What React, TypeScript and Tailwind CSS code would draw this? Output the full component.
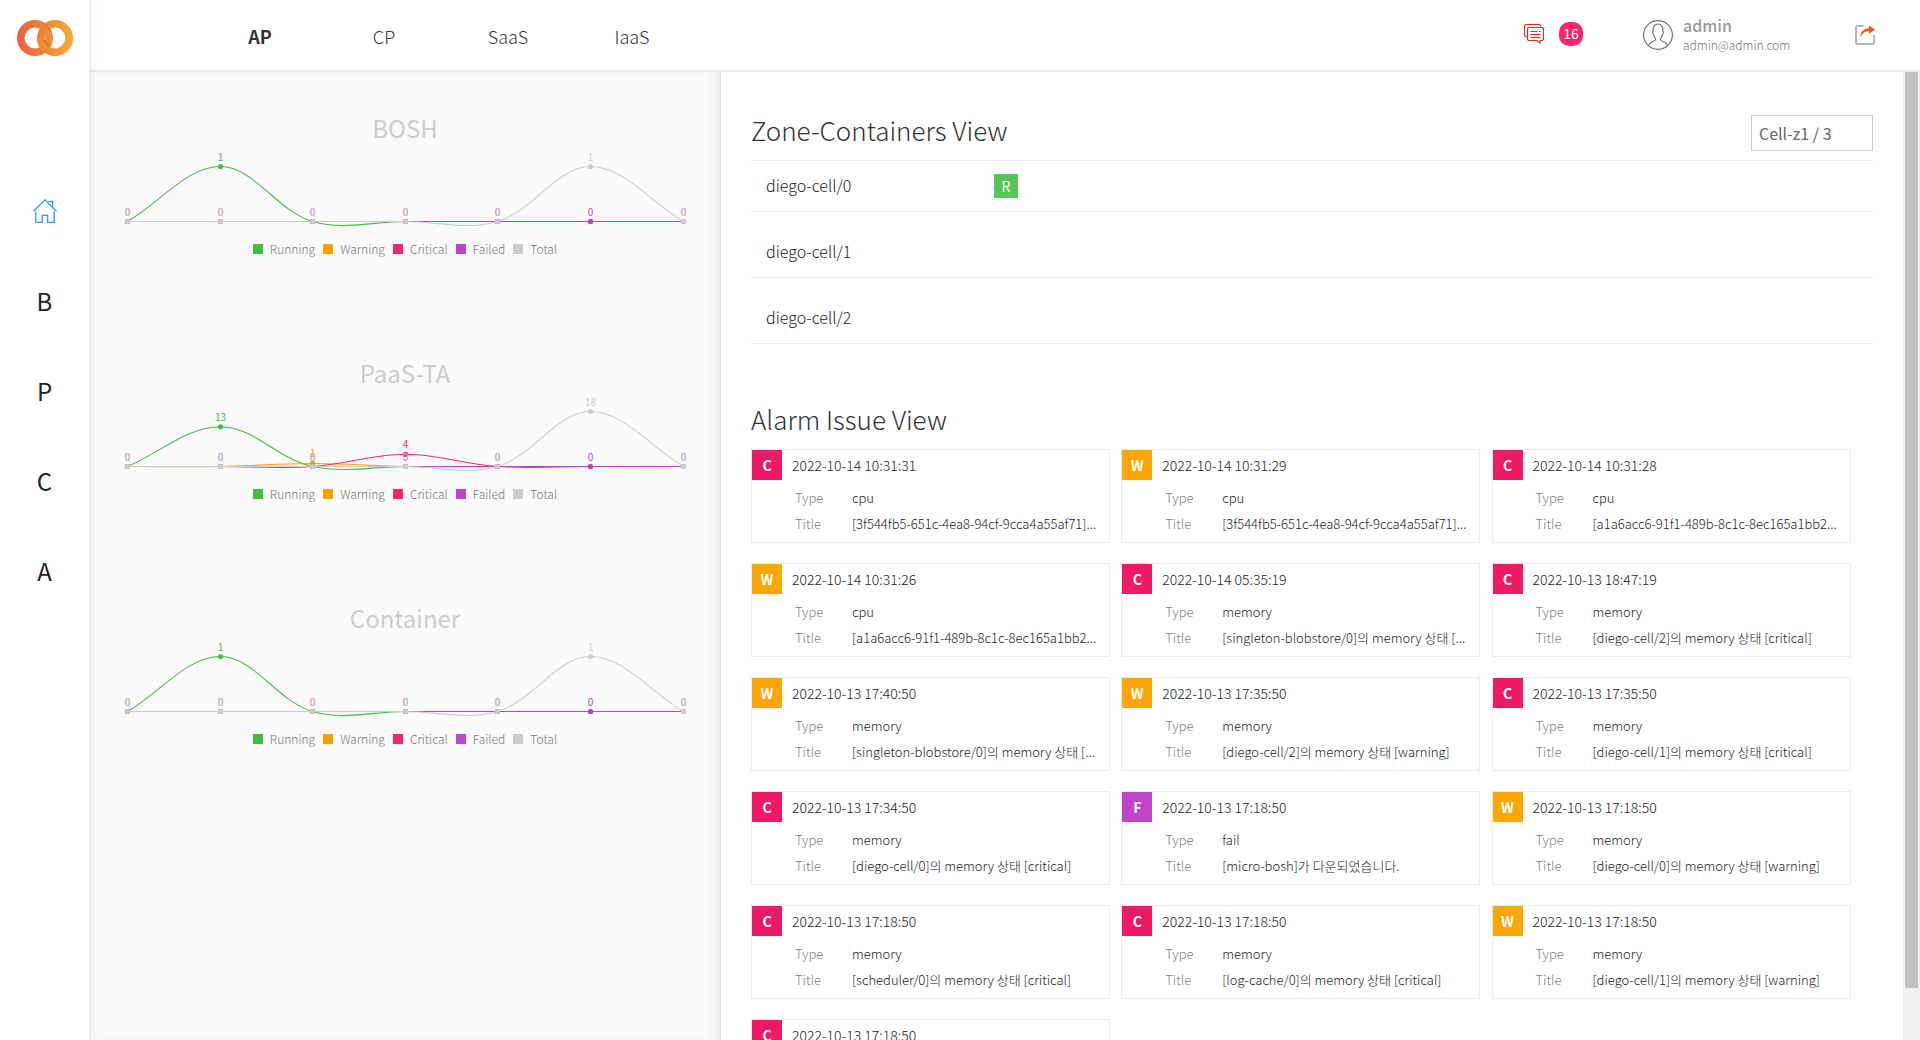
import React from "react";

type Level = "C" | "W" | "F";

type Alarm = { level: Level; date: string; type: string; title: string };

const FONT = "font-['Noto_Sans_CJK_KR','Noto_Sans',sans-serif]";

const levelColor: Record<Level, string> = {
  C: "bg-[#ed1a65]",
  W: "bg-[#fca605]",
  F: "bg-[#c044c8]",
};

const alarms: Alarm[] = [
  { level: "C", date: "2022-10-14 10:31:31", type: "cpu", title: "[3f544fb5-651c-4ea8-94cf-9cca4a55af71]..." },
  { level: "W", date: "2022-10-14 10:31:29", type: "cpu", title: "[3f544fb5-651c-4ea8-94cf-9cca4a55af71]..." },
  { level: "C", date: "2022-10-14 10:31:28", type: "cpu", title: "[a1a6acc6-91f1-489b-8c1c-8ec165a1bb2..." },
  { level: "W", date: "2022-10-14 10:31:26", type: "cpu", title: "[a1a6acc6-91f1-489b-8c1c-8ec165a1bb2..." },
  { level: "C", date: "2022-10-14 05:35:19", type: "memory", title: "[singleton-blobstore/0]의 memory 상태 [..." },
  { level: "C", date: "2022-10-13 18:47:19", type: "memory", title: "[diego-cell/2]의 memory 상태 [critical]" },
  { level: "W", date: "2022-10-13 17:40:50", type: "memory", title: "[singleton-blobstore/0]의 memory 상태 [..." },
  { level: "W", date: "2022-10-13 17:35:50", type: "memory", title: "[diego-cell/2]의 memory 상태 [warning]" },
  { level: "C", date: "2022-10-13 17:35:50", type: "memory", title: "[diego-cell/1]의 memory 상태 [critical]" },
  { level: "C", date: "2022-10-13 17:34:50", type: "memory", title: "[diego-cell/0]의 memory 상태 [critical]" },
  { level: "F", date: "2022-10-13 17:18:50", type: "fail", title: "[micro-bosh]가 다운되었습니다." },
  { level: "W", date: "2022-10-13 17:18:50", type: "memory", title: "[diego-cell/0]의 memory 상태 [warning]" },
  { level: "C", date: "2022-10-13 17:18:50", type: "memory", title: "[scheduler/0]의 memory 상태 [critical]" },
  { level: "C", date: "2022-10-13 17:18:50", type: "memory", title: "[log-cache/0]의 memory 상태 [critical]" },
  { level: "W", date: "2022-10-13 17:18:50", type: "memory", title: "[diego-cell/1]의 memory 상태 [warning]" },
  { level: "C", date: "2022-10-13 17:18:50", type: "memory", title: "[database/0]의 memory 상태 [critical]" },
];

const series = [
  { name: "Running", color: "#42be42", swatch: "bg-[#42be42]" },
  { name: "Warning", color: "#f9a100", swatch: "bg-[#f9a100]" },
  { name: "Critical", color: "#f9256d", swatch: "bg-[#f9256d]" },
  { name: "Failed", color: "#c044c8", swatch: "bg-[#c044c8]" },
  { name: "Total", color: "#cccccc", swatch: "bg-[#cccccc]" },
];

const charts = [
  {
    title: "BOSH",
    max: 1,
    data: [
      [0, 1, 0, 0],
      [0, 0, 0, 0, 0],
      [0, 0, 0, 0, 0, 0],
      [0, 0, 0, 0, 0, 0, 0],
      [0, 0, 0, 0, 0, 1, 0],
    ],
  },
  {
    title: "PaaS-TA",
    max: 18,
    data: [
      [0, 13, 0, 0],
      [0, 0, 1, 0, 0],
      [0, 0, 0, 4, 0, 0],
      [0, 0, 0, 0, 0, 0, 0],
      [0, 0, 0, 0, 0, 18, 0],
    ],
  },
  {
    title: "Container",
    max: 1,
    data: [
      [0, 1, 0, 0],
      [0, 0, 0, 0, 0],
      [0, 0, 0, 0, 0, 0],
      [0, 0, 0, 0, 0, 0, 0],
      [0, 0, 0, 0, 0, 1, 0],
    ],
  },
];

type Point = { x: number; y: number };

const TENSION = 0.36;

/* Catmull-Rom style smoothing with control points weighted by segment length. */
function smoothPath(points: Point[]): string {
  const controls = points.map((p, i) => {
    const prev = points[i - 1] ?? p;
    const next = points[i + 1] ?? p;
    const d1 = Math.hypot(p.x - prev.x, p.y - prev.y);
    const d2 = Math.hypot(next.x - p.x, next.y - p.y);
    const a = (TENSION * d1) / (d1 + d2);
    const b = (TENSION * d2) / (d1 + d2);
    return {
      before: { x: p.x - a * (next.x - prev.x), y: p.y - a * (next.y - prev.y) },
      after: { x: p.x + b * (next.x - prev.x), y: p.y + b * (next.y - prev.y) },
    };
  });
  return points
    .map((p, i) => {
      if (i === 0) return `M${p.x} ${p.y}`;
      const c1 = controls[i - 1].after;
      const c2 = controls[i].before;
      return `C${c1.x} ${c1.y} ${c2.x} ${c2.y} ${p.x} ${p.y}`;
    })
    .join(" ");
}

/* Coinciding zeros are labelled only by the two top-most series. */
const FIRST_ZERO_LABEL_SERIES = 3;

function StatusChart({ title, max, data }: { title: string; max: number; data: number[][] }) {
  const toPoint = (value: number, i: number): Point => ({
    x: 18.5 + Math.round(i * 92.6),
    y: 71.5 - (value / max) * 55,
  });
  return (
    <section className="flex h-[245px] flex-col">
      <h2 className="text-center text-2xl leading-9 font-normal text-[#cccccc]">{title}</h2>
      <svg viewBox="0 0 592 84" className="mt-1 block w-full overflow-visible" role="img" aria-label={`${title} status`}>
        {data.map((values, s) => {
          const points = values.map(toPoint);
          return (
            <g key={series[s].name}>
              <path d={smoothPath(points)} fill="none" stroke={series[s].color} strokeWidth="1.1" />
              {points.map((p, i) => (
                <circle key={i} cx={p.x} cy={p.y} r="2.6" fill={series[s].color} />
              ))}
            </g>
          );
        })}
        {data.map((values, s) => (
          <g key={series[s].name} fill={series[s].color} fontSize="10" textAnchor="middle">
            {values.map((value, i) => {
              if (value === 0 && s < FIRST_ZERO_LABEL_SERIES) return null;
              const p = toPoint(value, i);
              return (
                <text key={i} x={p.x} y={p.y - 6}>
                  {value}
                </text>
              );
            })}
          </g>
        ))}
      </svg>
      <ul className="mt-[5px] flex justify-center gap-2 text-xs leading-5 font-light text-[#777777]">
        {series.map((s) => (
          <li key={s.name} className="flex items-center gap-[7px]">
            <span className={`size-2.5 ${s.swatch}`} />
            {s.name}
          </li>
        ))}
      </ul>
    </section>
  );
}

function Logo() {
  return (
    <svg viewBox="0 0 56 36" className="h-9 w-14" aria-hidden="true">
      <defs>
        <linearGradient id="ringLeft" x1="0" x2="1">
          <stop offset="0" stopColor="#ec643f" />
          <stop offset="1" stopColor="#f18b38" />
        </linearGradient>
        <linearGradient id="ringRight" x1="0" x2="1">
          <stop offset="0" stopColor="#ee8236" />
          <stop offset="1" stopColor="#f6a633" />
        </linearGradient>
      </defs>
      <circle cx="38" cy="18" r="14.2" fill="none" stroke="url(#ringRight)" strokeWidth="7.6" />
      <circle cx="18" cy="18" r="14.2" fill="none" stroke="url(#ringLeft)" strokeWidth="7.6" />
      <path d="M23.8 18a14.2 14.2 0 0 0 5.500 11.200" fill="none" stroke="#f08c38" strokeWidth="7.6" />
      <path d="M27.500 4c3 2 5 4.500 6 7.500M22.500 30.500l2.500 3M27.500 20.500c1.500 3 3.500 4.500 5.500 5.500" fill="none" stroke="#cf5f26" strokeWidth="0.900" />
    </svg>
  );
}

function HomeIcon() {
  return (
    <svg viewBox="0 0 24 24" className="size-6" fill="none" stroke="#2a9df4" strokeWidth="1.3" aria-hidden="true">
      <path d="M0.500 12.300 12 0.900l11.500 11.400M2.800 12.500v10.900h6.400v-7.100h5.400v7.100h6.600V12.500M15.500 2.500h4.200v5" />
    </svg>
  );
}

function MessagesIcon() {
  return (
    <svg viewBox="0 0 20 20" className="size-5" fill="none" stroke="#f8221c" strokeWidth="1.1" aria-hidden="true">
      <path d="M2.500 12.500h-1l-1-1v-10l1-1h14l1 1v1" />
      <path d="M4.500 3.500h14l1 1v11l-1 1h-2.500v2.500L13 16.500H4.500l-1-1v-11z" />
      <path d="M6.500 7.500h7M15 7.500h1.500M6.500 10.500h10M6.500 13.500h10" />
    </svg>
  );
}

function AvatarIcon() {
  return (
    <svg viewBox="0 0 30 30" className="size-[30px]" fill="none" stroke="#6f6f6f" strokeWidth="1.1" aria-hidden="true">
      <circle cx="15" cy="15" r="14.400" />
      <path d="M5.500 25.500c.8-2.200 2.500-3.200 4.500-3.900 1.600-.6 2.600-1.200 2.700-2.100 0-1.200-1.400-2-2-4.500-1-1.300-1.200-3-.6-3.800C9.700 6.500 12 4 15 4s5.300 2.500 4.900 7.200c.6.800.4 2.500-.6 3.800-.6 2.500-2 3.300-2 4.500.1.900 1.100 1.500 2.700 2.100 2 .7 3.700 1.700 4.500 3.900" />
    </svg>
  );
}

function LogoutIcon() {
  return (
    <svg viewBox="0 0 20 20" className="size-5" fill="none" aria-hidden="true">
      <path d="M8.500 1H2.500Q1 1 1 2.500v15Q1 19 2.500 19h15q1.500 0 1.500-1.500V10" stroke="#b5b5b5" strokeWidth="2" />
      <path d="M5.200 12.600C5.400 7 8.500 3.400 14 3.200V0.400l6 4.200-6 4.200V6.300C10.200 6.300 7.300 8 5.200 12.600z" fill="#fb5310" />
    </svg>
  );
}

function AlarmCard({ alarm }: { alarm: Alarm }) {
  return (
    <article className="mr-[1%] mb-5 h-[94px] w-[32%] border border-[#ececec]">
      <header className="flex h-[30px] items-center">
        <span className={`flex size-[30px] items-center justify-center text-sm font-bold text-white ${levelColor[alarm.level]}`}>
          {alarm.level}
        </span>
        <time className="ml-2.5 text-sm leading-[30px] font-light text-[#222222]">{alarm.date}</time>
      </header>
      <dl className="mt-[5px] grid grid-cols-[57px_minmax(0,1fr)] pr-2 pl-[43px] text-[13px] leading-[26px] font-light">
        <dt className="text-[#808080]">Type</dt>
        <dd className="text-[#222222]">{alarm.type}</dd>
        <dt className="text-[#808080]">Title</dt>
        <dd className="whitespace-nowrap text-[#222222]">{alarm.title}</dd>
      </dl>
    </article>
  );
}

export default function App() {
  return (
    <div className={`flex h-screen overflow-hidden bg-white text-[#333333] ${FONT}`}>
      <aside className="z-10 flex w-[90px] shrink-0 flex-col items-center border-r border-[#ececec] bg-white pt-5 shadow-[2px_0_8px_rgba(0,0,0,0.06)]">
        <a href="#home" aria-label="Dashboard home">
          <Logo />
        </a>
        <nav className="mt-[110px] flex flex-col items-center text-2xl leading-[90px] text-[#222222]">
          <a href="#overview" aria-label="Overview" className="flex h-[90px] items-center">
            <HomeIcon />
          </a>
          <a href="#bosh">B</a>
          <a href="#paasta">P</a>
          <a href="#container">C</a>
          <a href="#alarm">A</a>
        </nav>
      </aside>

      <div className="flex min-w-0 grow flex-col">
        <header className="flex h-[72px] shrink-0 items-center border-b-2 border-[#ececec] bg-white">
          <nav className="mt-0.5 ml-[108px] grid grid-cols-[repeat(4,124px)] text-center text-lg font-light">
            <a href="#ap" className="font-bold">AP</a>
            <a href="#cp">CP</a>
            <a href="#saas">SaaS</a>
            <a href="#iaas">IaaS</a>
          </nav>
          <button type="button" aria-label="Messages" className="mb-0.5 ml-auto flex items-center gap-[15px]">
            <MessagesIcon />
            <span className="flex size-6 items-center justify-center rounded-[10px] bg-[#f9256d] pb-0.5 text-sm leading-5 text-white">16</span>
          </button>
          <div className="ml-[60px] flex items-center gap-2.5 text-[#999999]">
            <AvatarIcon />
            <div className="w-[172px]">
              <p className="text-base leading-5 font-medium">admin</p>
              <p className="text-xs leading-5 font-light text-[#777777]">admin@admin.com</p>
            </div>
          </div>
          <button type="button" aria-label="Log out" className="mr-[45px]">
            <LogoutIcon />
          </button>
        </header>

        <div className="flex min-h-0 grow">
          <section className="w-[631px] shrink-0 border-r border-[#dddddd] bg-[#fafafa] px-[19px] pt-[38px] shadow-[inset_-8px_0_10px_-4px_rgba(0,0,0,0.07)]">
            {charts.map((c) => (
              <StatusChart key={c.title} {...c} />
            ))}
          </section>

          <main className="min-w-0 grow overflow-hidden px-[30px]">
            <div className="mt-10 flex h-12 justify-between">
              <h1 className="text-[26px] leading-9 font-light text-[#333333]">Zone-Containers View</h1>
              <select
                aria-label="Cell zone"
                className="mt-[3px] h-9 w-[122px] appearance-none border border-[#cccccc] bg-white px-[7px] text-base text-[#666666]"
              >
                <option>Cell-z1 / 3</option>
              </select>
            </div>
            <ul className="flex flex-col gap-[15px] border-t border-[#ececec] text-base leading-6 font-light text-[#222222]">
              <li className="flex h-[51px] items-center border-b border-[#ececec] pl-[15px]">
                <span className="w-[228px] pb-0.5">diego-cell/0</span>
                <span className="flex size-6 items-center justify-center bg-[#56c556] text-sm font-normal text-white">R</span>
              </li>
              <li className="flex h-[51px] items-center border-b border-[#ececec] pb-0.5 pl-[15px]">diego-cell/1</li>
              <li className="flex h-[51px] items-center border-b border-[#ececec] pb-0.5 pl-[15px]">diego-cell/2</li>
            </ul>
            <h1 className="mt-[57px] mb-3 text-[26px] leading-9 font-light text-[#333333]">Alarm Issue View</h1>
            <div className="flex flex-wrap">
              {alarms.map((alarm, i) => (
                <AlarmCard key={i} alarm={alarm} />
              ))}
            </div>
          </main>

          <div className="w-[17px] shrink-0 bg-[#f0f0f0] px-0.5" aria-hidden="true">
            <div className="h-[94.6%] bg-[#c1c1c1]" />
          </div>
        </div>
      </div>
    </div>
  );
}
